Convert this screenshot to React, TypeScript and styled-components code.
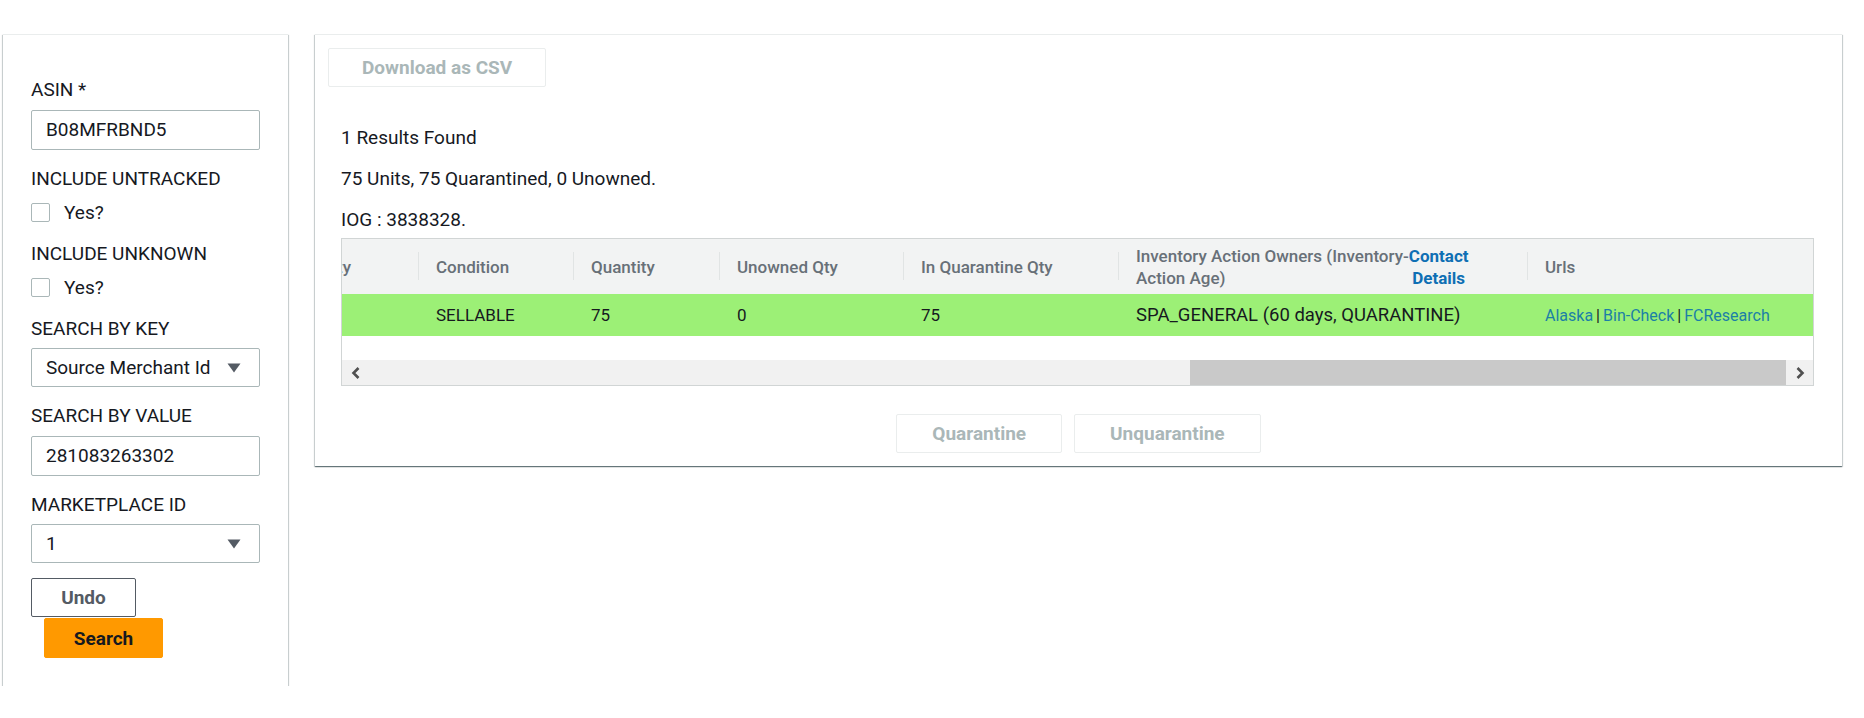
import React, { useLayoutEffect, useRef, useState } from "react";
import styled, { createGlobalStyle } from "styled-components";

const GlobalStyle = createGlobalStyle`
  html, body { margin: 0; padding: 0; background: #ffffff; }
  body {
    font-family: Roboto, "Liberation Sans", Arial, sans-serif;
    color: #16191f;
    -webkit-font-smoothing: antialiased;
  }
  * { box-sizing: border-box; }
`;

const Page = styled.div`
  display: flex;
  align-items: flex-start;
  gap: 27px;
  padding: 34px 0 0 3px;
`;

const Card = styled.section`
  background: #ffffff;
  border-top: 1px solid #eaeded;
  box-shadow: 0 1px 1px 0 rgba(0, 28, 36, 0.45), 1px 1px 1px 0 rgba(0, 28, 36, 0.15),
    -1px 1px 1px 0 rgba(0, 28, 36, 0.15);
`;

const SidePanel = styled(Card)`
  width: 285px;
  flex: none;
  padding: 43px 26px 28px 28px;
  display: flex;
  flex-direction: column;
`;

const FieldLabel = styled.div<{ $gap?: number }>`
  font-size: 19px;
  line-height: 24px;
  color: #16191f;
  margin-bottom: ${(p) => p.$gap ?? 7.5}px;
`;

const TextInput = styled.input`
  width: 229px;
  height: 40px;
  border: 1px solid #aab7b8;
  border-radius: 2px;
  padding: 0 14px;
  font-family: inherit;
  font-size: 19px;
  color: #16191f;
  background: #ffffff;
  margin-bottom: 17px;
  outline: none;
`;

const CheckRow = styled.div`
  display: flex;
  align-items: center;
  gap: 14px;
  height: 24px;
  font-size: 19px;
  line-height: 24px;
  margin-bottom: 17px;
`;

const CheckBox = styled.input`
  appearance: none;
  flex: none;
  width: 19px;
  height: 19px;
  margin: 0;
  border: 1px solid #aab7b8;
  border-radius: 2px;
  background: #ffffff;
`;

const SelectBox = styled.div<{ $last?: boolean }>`
  width: 229px;
  height: 39px;
  border: 1px solid #aab7b8;
  border-radius: 2px;
  display: flex;
  align-items: center;
  justify-content: space-between;
  padding: 0 18px 0 14px;
  font-size: 19px;
  color: #16191f;
  margin-bottom: ${(p) => (p.$last ? 15 : 17)}px;
`;

const Caret = () => (
  <svg width="14" height="10" viewBox="0 0 14 10" aria-hidden="true">
    <path d="M0.5 0.5 H13.5 L7 9.5 Z" fill="#545b64" />
  </svg>
);

const ActionStack = styled.div`
  display: flex;
  flex-direction: column;
  align-items: flex-start;
`;

const BaseButton = styled.button`
  height: 40px;
  border-radius: 2px;
  font-family: inherit;
  font-size: 19px;
  font-weight: 700;
  padding: 0 28px;
  cursor: pointer;
`;

const UndoButton = styled(BaseButton)`
  width: 105px;
  height: 39px;
  background: #ffffff;
  border: 1px solid #545b64;
  color: #545b64;
`;

const SearchButton = styled(BaseButton)`
  width: 119px;
  margin: 1px 0 0 13px;
  background: #ff9900;
  border: 1px solid #ff9900;
  color: #16191f;
`;

const MainPanel = styled(Card)`
  width: 1527px;
  flex: none;
  padding: 13px;
  display: flex;
  flex-direction: column;
`;

const DisabledButton = styled(BaseButton)<{ $pad?: number }>`
  height: 39px;
  background: #ffffff;
  border: 1px solid #eaeded;
  color: #aab7b8;
  padding: 0 ${(p) => p.$pad ?? 33}px;
  cursor: default;
`;

const Toolbar = styled.div`
  display: flex;
`;

const Results = styled.div`
  margin: 38.5px 15px 0 13px;
  display: flex;
  flex-direction: column;
`;

const Summary = styled.p`
  margin: 0 0 17px;
  font-size: 19px;
  line-height: 24px;
  &:last-of-type {
    margin-bottom: 6.5px;
  }
`;

const TableFrame = styled.div`
  border: 1px solid #d1d5d5;
  background: #ffffff;
`;

const Viewport = styled.div`
  overflow-x: scroll;
  overflow-y: hidden;
  padding-bottom: 24px;
  scrollbar-width: none;
  &::-webkit-scrollbar {
    display: none;
  }
`;

const Table = styled.table`
  border-collapse: collapse;
  table-layout: fixed;
`;

const HeadCell = styled.th<{ $first?: boolean }>`
  position: relative;
  height: 55px;
  padding: 0 18px;
  background: #f2f3f3;
  text-align: left;
  vertical-align: middle;
  font-size: 17px;
  line-height: 22px;
  font-weight: 500;
  color: #687078;
  white-space: nowrap;
  &::before {
    content: "";
    display: ${(p) => (p.$first ? "none" : "block")};
    position: absolute;
    left: 0;
    top: 13px;
    bottom: 14px;
    width: 1px;
    background: #e1e4e4;
  }
`;

const OwnersHead = styled.div`
  display: flex;
  align-items: flex-start;
`;

const ContactLink = styled.a`
  color: #0f6fb4;
  font-weight: 700;
  text-align: center;
  text-decoration: none;
`;

const BodyRow = styled.tr`
  background: #9cf076;
`;

const BodyCell = styled.td<{ $size?: number }>`
  height: 42px;
  padding: 0 18px;
  font-size: ${(p) => p.$size ?? 17}px;
  color: #16191f;
  white-space: nowrap;
  vertical-align: middle;
`;

const UrlLink = styled.a`
  color: #1b7fa6;
  text-decoration: none;
`;

const Pipe = styled.span`
  color: #16191f;
  margin: 0 3px;
`;

const ScrollBar = styled.div`
  display: flex;
  height: 25px;
  background: #f1f1f1;
`;

const ScrollArrow = styled.div`
  flex: none;
  width: 27px;
  display: flex;
  align-items: center;
  justify-content: center;
  background: #f1f1f1;
`;

const Track = styled.div`
  flex: 1;
  display: flex;
`;

const Thumb = styled.div`
  height: 100%;
  background: #c9c9c9;
`;

const ActionRow = styled.div`
  display: flex;
  justify-content: center;
  gap: 12px;
  margin-top: 28px;
`;

const Chevron = ({ dir }: { dir: "left" | "right" }) => (
  <svg width="10" height="12" viewBox="0 0 10 12" aria-hidden="true">
    <path
      d={dir === "left" ? "M7.5 1 L2.5 6 L7.5 11" : "M2.5 1 L7.5 6 L2.5 11"}
      fill="none"
      stroke="#505050"
      strokeWidth="2.6"
    />
  </svg>
);

type Col = { key: string; title: React.ReactNode; width: number };

const hiddenCols: Col[] = [
  { key: "asin", title: "ASIN", width: 180 },
  { key: "mp", title: "Marketplace Id", width: 170 },
  { key: "merchant", title: "Source Merchant Id", width: 220 },
  { key: "iog", title: "IOG", width: 150 },
  { key: "fnsku", title: "FNSKU", width: 180 },
  { key: "fc", title: "Fulfillment Center", width: 200 },
  { key: "bin", title: "Bin Id", width: 200 },
  { key: "container", title: "Container Id", width: 220 },
  { key: "owner", title: "Owner", width: 200 },
  { key: "disp", title: "Disposition", width: 255 },
  { key: "entity", title: "Entity", width: 128 },
];

const visibleCols: Col[] = [
  { key: "condition", title: "Condition", width: 155 },
  { key: "qty", title: "Quantity", width: 146 },
  { key: "unowned", title: "Unowned Qty", width: 184 },
  { key: "quar", title: "In Quarantine Qty", width: 215 },
  {
    key: "owners",
    title: (
      <OwnersHead>
        <span>
          Inventory Action Owners (Inventory-
          <br />
          Action Age)
        </span>
        <ContactLink href="#contact">
          Contact
          <br />
          Details
        </ContactLink>
      </OwnersHead>
    ),
    width: 409,
  },
  { key: "urls", title: "Urls", width: 286 },
];

const columns = [...hiddenCols, ...visibleCols];

const rowValues: Record<string, React.ReactNode> = {
  asin: "B08MFRBND5",
  mp: "1",
  merchant: "281083263302",
  iog: "3838328",
  fnsku: "B08MFRBND5",
  fc: "",
  bin: "",
  container: "",
  owner: "",
  disp: "",
  entity: "",
  condition: "SELLABLE",
  qty: "75",
  unowned: "0",
  quar: "75",
  owners: "SPA_GENERAL (60 days, QUARANTINE)",
};

function ResultsTable() {
  const viewRef = useRef<HTMLDivElement>(null);
  const trackRef = useRef<HTMLDivElement>(null);
  const [thumb, setThumb] = useState({ left: 0, width: 0 });

  useLayoutEffect(() => {
    const view = viewRef.current;
    const track = trackRef.current;
    if (!view || !track) return;
    const update = () => {
      const max = view.scrollWidth - view.clientWidth;
      const trackW = track.clientWidth;
      const width = Math.max(20, (trackW * view.clientWidth) / view.scrollWidth);
      const left = max > 0 ? ((trackW - width) * view.scrollLeft) / max : 0;
      setThumb({ left, width });
    };
    view.scrollLeft = view.scrollWidth - view.clientWidth;
    update();
    view.addEventListener("scroll", update);
    return () => view.removeEventListener("scroll", update);
  }, []);

  return (
    <TableFrame>
      <Viewport ref={viewRef}>
        <Table style={{ width: columns.reduce((s, c) => s + c.width, 0) }}>
          <colgroup>
            {columns.map((c) => (
              <col key={c.key} style={{ width: c.width }} />
            ))}
          </colgroup>
          <thead>
            <tr>
              {columns.map((c, i) => (
                <HeadCell key={c.key} $first={i === 0}>
                  {c.title}
                </HeadCell>
              ))}
            </tr>
          </thead>
          <tbody>
            <BodyRow>
              {columns.map((c) =>
                c.key === "urls" ? (
                  <BodyCell key={c.key} $size={16}>
                    <UrlLink href="#alaska">Alaska</UrlLink>
                    <Pipe>|</Pipe>
                    <UrlLink href="#bin-check">Bin-Check</UrlLink>
                    <Pipe>|</Pipe>
                    <UrlLink href="#fcresearch">FCResearch</UrlLink>
                  </BodyCell>
                ) : (
                  <BodyCell key={c.key} $size={c.key === "owners" ? 18.5 : 17}>
                    {rowValues[c.key]}
                  </BodyCell>
                )
              )}
            </BodyRow>
          </tbody>
        </Table>
      </Viewport>
      <ScrollBar>
        <ScrollArrow>
          <Chevron dir="left" />
        </ScrollArrow>
        <Track ref={trackRef}>
          <Thumb style={{ marginLeft: thumb.left, width: thumb.width }} />
        </Track>
        <ScrollArrow>
          <Chevron dir="right" />
        </ScrollArrow>
      </ScrollBar>
    </TableFrame>
  );
}

export default function App() {
  return (
    <>
      <GlobalStyle />
      <Page>
        <SidePanel>
          <FieldLabel>ASIN *</FieldLabel>
          <TextInput defaultValue="B08MFRBND5" />

          <FieldLabel $gap={10}>INCLUDE UNTRACKED</FieldLabel>
          <CheckRow>
            <CheckBox type="checkbox" aria-label="Include untracked" />
            <span>Yes?</span>
          </CheckRow>

          <FieldLabel $gap={10}>INCLUDE UNKNOWN</FieldLabel>
          <CheckRow>
            <CheckBox type="checkbox" aria-label="Include unknown" />
            <span>Yes?</span>
          </CheckRow>

          <FieldLabel>SEARCH BY KEY</FieldLabel>
          <SelectBox role="combobox">
            <span>Source Merchant Id</span>
            <Caret />
          </SelectBox>

          <FieldLabel>SEARCH BY VALUE</FieldLabel>
          <TextInput defaultValue="281083263302" />

          <FieldLabel>MARKETPLACE ID</FieldLabel>
          <SelectBox role="combobox" $last>
            <span>1</span>
            <Caret />
          </SelectBox>

          <ActionStack>
            <UndoButton>Undo</UndoButton>
            <SearchButton>Search</SearchButton>
          </ActionStack>
        </SidePanel>

        <MainPanel>
          <Toolbar>
            <DisabledButton disabled>Download as CSV</DisabledButton>
          </Toolbar>
          <Results>
            <Summary>1 Results Found</Summary>
            <Summary>75 Units, 75 Quarantined, 0 Unowned.</Summary>
            <Summary>IOG : 3838328.</Summary>
            <ResultsTable />
          </Results>
          <ActionRow>
            <DisabledButton disabled $pad={35}>
              Quarantine
            </DisabledButton>
            <DisabledButton disabled $pad={35}>
              Unquarantine
            </DisabledButton>
          </ActionRow>
        </MainPanel>
      </Page>
    </>
  );
}
